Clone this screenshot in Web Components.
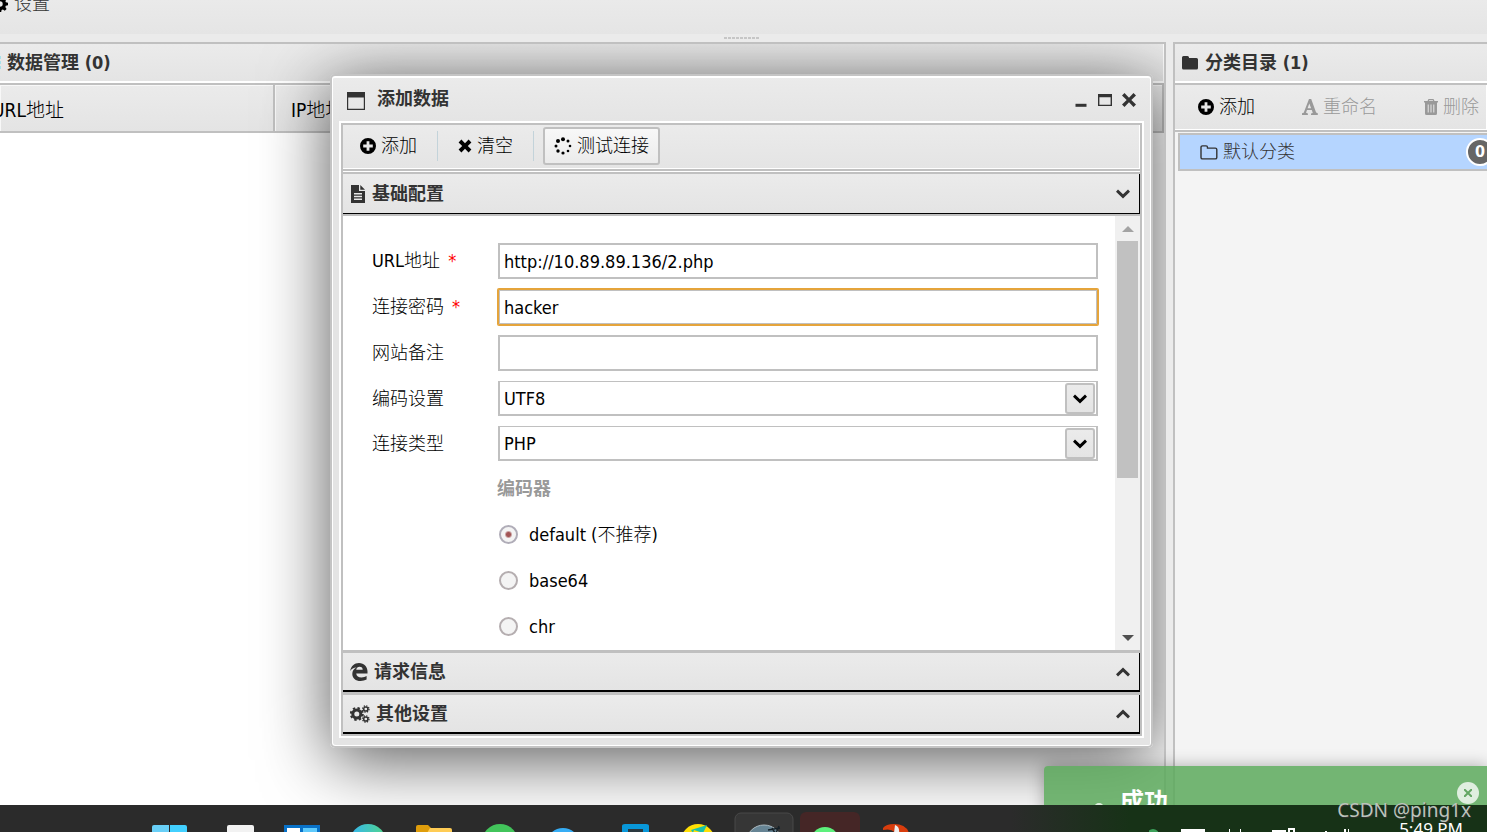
<!DOCTYPE html>
<html lang="zh-CN">
<head>
<meta charset="utf-8">
<title>数据管理</title>
<style>
  html, body { height: 100%; margin: 0; }
  body {
    overflow: hidden;
    color: #000;
    background: #ebebeb;
    font: 18px/24px "DejaVu Sans Condensed", "Noto Sans CJK SC", "Noto Sans", sans-serif;
    --line: #c0c0c0;
    --face: linear-gradient(#ebebeb, #e4e4e4);
    --ink: #333;
  }
</style>
</head>
<body>
<app-shell></app-shell>
<script>
const ICONS = {
  gear: ['0 0 16 16', '<path fill-rule="evenodd" d="M6.7 0h2.6l.4 2.2 1.3.5L12.900 1.400l1.800 1.800-1.300 1.800.5 1.300 2.100.4v2.600l-2.200.4-.5 1.300 1.300 1.900-1.800 1.800-1.900-1.300-1.300.5-.4 2.100H6.700l-.4-2.200-1.300-.5-1.800 1.300-1.900-1.800 1.300-1.900-.5-1.300L0 9.300V6.700l2.200-.4.5-1.300-1.300-1.800 1.800-1.800L5 2.700l1.300-.5zM8 5.300a2.700 2.700 0 1 0 0 5.400 2.700 2.700 0 0 0 0-5.400z"/>'],
  plus: ['0 0 16 16', '<path fill-rule="evenodd" d="M8 0a8 8 0 1 1 0 16A8 8 0 0 1 8 0zM6.600 3.200v3.400H3.200v2.800h3.400v3.400h2.800V9.400h3.400V6.600H9.400V3.200z"/>'],
  times: ['0 0 14 14', '<path d="M3.400.6 7 4.200 10.600.6l2.800 2.800L9.800 7l3.600 3.600-2.800 2.800L7 9.800l-3.600 3.600-2.800-2.800L4.200 7 .6 3.400z"/>'],
  spinner: ['0 0 18 18', '<circle cx="9" cy="2.200" r="2"/><circle cx="14" cy="4" r="1.500"/><circle cx="16" cy="9" r="1.300"/><circle cx="14" cy="14" r="1.300"/><circle cx="9" cy="16" r="1.600"/><circle cx="4" cy="14" r="1.700"/><circle cx="2" cy="9" r="1.500"/><circle cx="4" cy="4" r="2"/>'],
  file: ['0 0 16 18', '<path fill-rule="evenodd" d="M1 0h8v6h6v12H1zM10.300 0 15 4.700h-4.700zM4 8v1.400h8V8zm0 2.800v1.400h8v-1.400zm0 2.800V15h8v-1.400z"/>'],
  folder: ['0 0 18 14', '<path d="M2.500 0h4Q8 0 8 1.500V2h7.500Q17 2 17 3.500v8.500q0 1.500-1.500 1.500h-13Q1 13.500 1 12V1.500Q1 0 2.500 0z"/>'],
  folderOpen: ['0 0 18 15', '<path fill="none" stroke="currentColor" stroke-width="1.400" d="M2.500.9h3.600q1.400 0 1.400 1.500v.7h7.800q1.500 0 1.500 1.500v7.800q0 1.500-1.500 1.500H2.500Q1 13.900 1 12.400v-10Q1 .9 2.500.9z"/>'],
  letter: ['0 0 16 16', '<path fill-rule="evenodd" d="M7 0h2.200l4.900 13.600 1.700.6V16H9v-1.600l1.800-.5-1-3H5l-1 2.900 1.900.6V16H0v-1.700l1.700-.6zM7.300 4.600 5.600 9.200h3.500z"/>'],
  trash: ['0 0 14 16', '<path fill-rule="evenodd" d="M4.500 0h5l1 2H14v1.600h-1V14.500q0 1.500-1.500 1.500h-9Q1 16 1 14.500V3.600H0V2h3.500zm.7 1.200L4.900 2h4.200l-.3-.8zM3.700 5.500v8h1v-8zm2.800 0v8h1v-8zm2.800 0v8h1v-8z"/>'],
  window: ['0 0 18 18', '<path fill-rule="evenodd" d="M0 0h18v18H0zM1.200 5.500v11.300h15.600V5.500z"/>'],
  min: ['0 0 14 14', '<rect x="1.500" y="10.800" width="11" height="3"/>'],
  max: ['0 0 14 14', '<path fill-rule="evenodd" d="M0 1h14v12H0zM1.400 4.200v7.500h11.200V4.200z"/>'],
  close: ['0 0 14 14', '<path d="M2.500 0 7 4.700 11.500 0 14 2.500 9.300 7l4.700 4.500-2.500 2.500L7 9.300 2.500 14 0 11.500 4.700 7 0 2.500z"/>'],
  down: ['0 0 14 10', '<path d="m2 .5 5 4.800L12 .5l2 2.200-7 6.800-7-6.800z"/>'],
  up: ['0 0 14 10', '<path d="M2 9.500 7 4.700l5 4.800 2-2.200L7 .5 0 7.300z"/>'],
  edge: ['0 0 18 18', '<path d="M.2 8C1 3 4.300 0 9 0c5.200 0 8.500 3.700 8.500 8.600v1.900H6.200c.2 2.600 2.400 3.900 5.300 3.900 2.100 0 3.800-.6 5.100-1.400v3.600c-1.700.9-3.800 1.400-6 1.400C5.600 18 2.300 15 2.300 10.900c0-2.700 1.600-5.100 4.300-6.300C3.700 4.700 1.500 6 .2 8zm6-1.200h6.500c0-1.900-1-3-3.100-3C7.700 3.800 6.600 5 6.200 6.800z"/>'],
  gears: ['0 0 20 18', '<circle cx="6.800" cy="9" r="4" fill="none" stroke="currentColor" stroke-width="3"/><circle cx="6.800" cy="9" r="6" fill="none" stroke="currentColor" stroke-width="2" stroke-dasharray="2.400 2.310"/><circle cx="15.800" cy="4" r="2.100" fill="none" stroke="currentColor" stroke-width="1.500"/><circle cx="15.800" cy="4" r="3.200" fill="none" stroke="currentColor" stroke-width="1.300" stroke-dasharray="1.300 1.210"/><circle cx="15.800" cy="14" r="2.100" fill="none" stroke="currentColor" stroke-width="1.500"/><circle cx="15.800" cy="14" r="3.200" fill="none" stroke="currentColor" stroke-width="1.300" stroke-dasharray="1.300 1.210"/>'],
  list: ['0 0 16 14', '<path fill="#a8e2ea" d="M0 0h16v3H0zm0 5h16v3H0zm0 5h16v3H0z"/>']
};

function define(name, css, html, setup) {
  const tpl = document.createElement('template');
  tpl.innerHTML = `<style>*{box-sizing:border-box}${css}</style>${html}`;
  customElements.define(name, class extends HTMLElement {
    connectedCallback() {
      if (this.shadowRoot) return;
      this.attachShadow({ mode: 'open' }).append(tpl.content.cloneNode(true));
      if (setup) setup(this, this.shadowRoot);
    }
  });
}

define('ui-icon', `:host{display:inline-flex;flex:none} svg{display:block}`, ``, (el, root) => {
  const [box, body] = ICONS[el.getAttribute('name')];
  const [, , w, h] = box.split(' ');
  root.innerHTML += `<svg viewBox="${box}" width="${w}" height="${h}" fill="currentColor" aria-hidden="true">${body}</svg>`;
});

define('tool-button', `
  :host{display:block}
  button{display:flex;align-items:center;gap:5px;height:38px;padding:0 9px;font:inherit;font-weight:300;color:inherit;background:none;border:2px solid transparent;border-radius:3px}
  :host([framed]) button{border-color:var(--line);background:linear-gradient(#f8f8f8,#ebebeb)}
  button:disabled{color:#999}`,
  `<button type="button"><slot></slot></button>`,
  (el, root) => {
    const b = root.querySelector('button');
    b.disabled = el.hasAttribute('disabled');
    const icon = document.createElement('ui-icon');
    icon.setAttribute('name', el.getAttribute('icon'));
    b.prepend(icon);
  });

define('tool-bar', `
  :host{display:flex;align-items:center;background:var(--face);box-shadow:inset -1px -1px #fff}
  ::slotted(hr){width:1px;height:30px;margin:0;border:0;background:#c3d3da}`, `<slot></slot>`);

define('panel-title', `
  :host{display:flex;align-items:center;gap:6px;height:39px;padding:0 6px;border-bottom:2px solid #fff;background:var(--face)}
  ::slotted(ui-icon){color:var(--ink)}
  h2{margin:0;font:inherit;font-weight:700;color:var(--ink)}`,
  `<slot name="icon"></slot><h2><slot></slot></h2>`);

define('data-list', `
  :host{display:block}
  table{width:100%;table-layout:fixed;border-collapse:separate;border-spacing:0}
  th{height:48px;padding:3px 0 0 16px;font-size:19px;text-align:left;font-weight:300;white-space:nowrap;background:var(--face);border-right:2px solid var(--line);border-bottom:2px solid var(--line);box-shadow:inset 1px 1px #f8f8f8}
  th:first-child{width:275px;padding-left:0;text-indent:-8px}`,
  `<table><thead><tr><th scope="col">URL地址</th><th scope="col">IP地址</th></tr></thead></table>`);

define('fold-section', `
  :host{display:flex;flex-direction:column;flex:none}
  :host([open]){flex:1;min-height:0}
  button{display:flex;flex:none;align-items:center;gap:6px;width:100%;height:39px;padding:0 9px 0 7px;font:inherit;font-weight:700;color:var(--ink);background:var(--face);border:0 solid #000;border-width:0 1px 2px 0;text-align:left}
  :host([open]) button{height:40px;border-bottom-width:1px}
  .grow{flex:1}
  .body{display:none}
  :host([open]) .body{display:flex;flex:1;min-height:0;border-top:2px solid var(--line)}`,
  `<button type="button"><slot name="icon"></slot><span class="grow"></span></button><div class="body"><slot></slot></div>`,
  (el, root) => {
    root.querySelector('.grow').textContent = el.getAttribute('heading');
    const i = document.createElement('ui-icon');
    i.setAttribute('name', el.hasAttribute('open') ? 'down' : 'up');
    const b = root.querySelector('button');
    b.setAttribute('aria-expanded', el.hasAttribute('open'));
    b.append(i);
  });

define('text-row', `
  :host{display:grid;grid-template-columns:126px 1fr;align-items:center;height:36px;margin-bottom:10px}
  label{font-weight:300;white-space:nowrap} label b{color:red;font-weight:400;margin-left:8px}
  input{width:100%;height:100%;padding:0 4px;font:inherit;color:#000;background:#fff;border:2px solid var(--line);border-radius:0;outline:0}
  :host([active]) input{padding:0 5px;border:1px solid #e5a43b;border-radius:1px;box-shadow:0 0 0 1px #e5a43b,inset 0 0 0 1px #c0c0c0}`,
  `<label for="f"></label><input id="f" type="text">`,
  (el, root) => {
    root.querySelector('label').innerHTML = el.getAttribute('label') + (el.hasAttribute('required') ? '<b>*</b>' : '');
    root.querySelector('input').value = el.getAttribute('value') || '';
  });

define('select-row', `
  :host{display:grid;grid-template-columns:126px 1fr;align-items:center;height:35px;margin-bottom:10px}
  label{font-weight:300}
  .box{display:flex;position:relative;height:100%}
  select{flex:1;padding:2px 4px 0;font:inherit;color:#000;background:#fff;border:2px solid var(--line);border-top-width:1px;border-radius:0;appearance:none}
  .arrow{position:absolute;right:3px;top:2px;display:grid;place-items:center;width:30px;height:31px;border:2px solid var(--line);border-radius:3px;background:var(--face);pointer-events:none}`,
  `<label for="s"></label><div class="box"><select id="s"><option></option></select><span class="arrow"><ui-icon name="down"></ui-icon></span></div>`,
  (el, root) => {
    root.querySelector('label').textContent = el.getAttribute('label');
    root.querySelector('option').textContent = el.getAttribute('value');
  });

define('encoder-list', `
  :host{display:block;padding-left:125px}
  fieldset{margin:0;padding:0;border:0}
  legend{padding:0;height:36px;line-height:36px;margin-bottom:10px;color:#999;font-weight:700}
  label{display:flex;align-items:center;gap:11px;height:36px;margin-bottom:10px;font-weight:300}
  input{appearance:none;width:19px;height:19px;margin:0 0 2px 2px;border:2px solid #b5aeb0;border-radius:50%;background:#f4f4f4}
  input:checked{border-color:#b0adb8;background:radial-gradient(circle,#a25555 0 2px,#f4f4f4 4px)}`,
  `<fieldset><legend>编码器</legend>
   <label><input type="radio" name="enc" checked><span>default (不推荐)</span></label>
   <label><input type="radio" name="enc"><span>base64</span></label>
   <label><input type="radio" name="enc"><span>chr</span></label></fieldset>`);

define('scroll-pane', `
  :host{display:flex;flex:1;min-height:0;background:#fff}
  .content{flex:1;overflow:hidden;padding:27px 17px 0 29px}
  .rail{display:flex;flex-direction:column;align-items:center;width:25px;padding:10px 2px 9px;background:#f0f0f0}
  .thumb{flex:0 0 237px;align-self:stretch;margin:9px 0 auto;background:#c1c1c1}
  .rail svg{flex:none}`,
  `<div class="content"><slot></slot></div>
   <div class="rail"><svg width="12" height="6"><path fill="#a3a3a3" d="M0 6 6 0l6 6z"/></svg><div class="thumb"></div><svg width="12" height="6"><path fill="#505050" d="M0 0h12L6 6z"/></svg></div>`);

define('data-window', `
  :host{display:flex;flex-direction:column;padding:2px 7px 8px;border:2px solid #c4c4c4;border-radius:5px;background:linear-gradient(#ebebeb,#e4e4e4 48px);box-shadow:inset 0 2px #fff,inset 1px -1px #fff,inset -1px 0 #fff,0 12px 68px rgba(0,0,0,.66)}
  header{display:flex;align-items:center;height:43px;padding:0 8px 2px;gap:12px;color:var(--ink)}
  header ui-icon{margin-top:4px}
  header button ui-icon{margin-top:2px}
  .controls{display:flex;gap:10px}
  h1{flex:1;margin:0;font:inherit;font-weight:700}
  header button{display:flex;padding:0;border:0;background:none;color:inherit}
  .inner{display:flex;flex-direction:column;flex:1;min-height:0;border:2px solid #fff}
  .frame{display:flex;flex-direction:column;flex:1;min-height:0;border:2px solid var(--line)}
  tool-bar{height:46px;padding:0 0 2px 6px;border-bottom:2px solid var(--line)}
  tool-bar hr{margin:0 9px}
  .folds{display:flex;flex-direction:column;flex:1;min-height:0;gap:3px;background:var(--line);border-top:1px solid #fff;padding-top:2px}`,
  `<header><ui-icon name="window"></ui-icon><h1>添加数据</h1>
     <div class="controls"><button type="button" aria-label="最小化"><ui-icon name="min"></ui-icon></button>
     <button type="button" aria-label="最大化"><ui-icon name="max"></ui-icon></button>
     <button type="button" aria-label="关闭"><ui-icon name="close"></ui-icon></button></div></header>
   <div class="inner"><div class="frame">
     <tool-bar><tool-button icon="plus">添加</tool-button><hr><tool-button icon="times">清空</tool-button><hr><tool-button icon="spinner" framed>测试连接</tool-button></tool-bar>
     <div class="folds">
       <fold-section open heading="基础配置"><ui-icon slot="icon" name="file"></ui-icon>
         <scroll-pane>
           <text-row label="URL地址" required value="http://10.89.89.136/2.php"></text-row>
           <text-row label="连接密码" required active value="hacker"></text-row>
           <text-row label="网站备注"></text-row>
           <select-row label="编码设置" value="UTF8"></select-row>
           <select-row label="连接类型" value="PHP"></select-row>
           <encoder-list></encoder-list>
         </scroll-pane>
       </fold-section>
       <fold-section heading="请求信息"><ui-icon slot="icon" name="edge"></ui-icon></fold-section>
       <fold-section heading="其他设置"><ui-icon slot="icon" name="gears"></ui-icon></fold-section>
     </div></div></div>`);

define('category-panel', `
  :host{display:flex;flex-direction:column;background:#f4f4f4;border:solid var(--line);border-width:2px 0 0 2px;white-space:nowrap;overflow:hidden}
  tool-bar{height:49px;padding:0 0 2px 12px;border:solid var(--line);border-width:2px 0}
  tool-bar hr{margin:0 16px 0 9px}
  a{display:flex;align-items:center;gap:5px;height:38px;margin:1px 0 0 3px;padding-left:20px;border:2px solid var(--line);border-right:0;background:#b5d5ff;color:var(--ink);text-decoration:none;font-weight:300}
  .count{display:grid;place-items:center;width:28px;height:28px;margin:0 -7px 0 auto;border:2px solid #fff;border-radius:50%;background:#666;color:#fff;font-size:16px;font-weight:700}`,
  `<panel-title><ui-icon slot="icon" name="folder"></ui-icon>分类目录 (1)</panel-title>
   <tool-bar><tool-button icon="plus">添加</tool-button><hr><tool-button icon="letter" disabled>重命名</tool-button><hr><tool-button icon="trash" disabled>删除</tool-button></tool-bar>
   <a href="#default"><ui-icon name="folderOpen"></ui-icon>默认分类<span class="count">0</span></a>`);

define('toast-note', `
  :host{display:flex;justify-content:space-between;align-items:flex-start;padding:16px 8px 0 50px;height:60px;border-radius:4px 0 0 0;background:rgba(92,169,92,.85);color:#fff;box-shadow:0 0 16px rgba(0,0,0,.3)}
  .msg{display:flex;gap:16px;font-size:24px;font-weight:700;line-height:40px}
  .dot{width:10px;height:10px;margin-top:21px;border-radius:50%;background:#dff0df}
  button{display:grid;place-items:center;width:22px;height:22px;padding:0;border:0;border-radius:50%;background:#dfeedf}`,
  `<div class="msg" role="status"><span class="dot"></span>成功</div>
   <button type="button" aria-label="关闭"><svg width="8" height="8" stroke="#63a663" stroke-width="2"><path d="m0 0 8 8M8 0 0 8"/></svg></button>`);

define('task-bar', `
  :host{display:flex;justify-content:space-between;height:27px;overflow:hidden;padding:0 24px 0 137px;background:linear-gradient(90deg,#2b2b2b 68%,#173217 76%);color:#fff}
  .apps{display:grid;grid-template-columns:repeat(12,66px)}
  .tray{display:flex;align-items:flex-start;gap:24px}
  .tray svg{margin-top:22px}
  time{margin-top:12px;font-family:"Noto Sans",sans-serif;font-size:17px;line-height:24px;white-space:nowrap}`,
  `<div class="apps"></div>
   <div class="tray"><svg width="226" height="5"><circle cx="4" cy="8" r="6" fill="#3ca15a"/><path fill="#fff" d="M32 2h24v3H32zM80 2h1v3h-1zM91 2h1v3h-1zM123 3h14v2h-14zM139 1h7v4h-2V3h-3v2h-2zM176 4h2v1h-2zM195 2h2v3h-2zM199 2h1v3h-1z"/></svg><time>5:49 PM</time></div>`,
  (el, root) => {
    const art = [
      '<path fill="#68cff7" d="M15 22q0-2 2-2h15v8H15z"/><path fill="#42d0ff" d="M33 20h15q2 0 2 2v6H33z"/>',
      '<path fill="#f2f2f2" d="M24 22q0-2 2-2h23q2 0 2 2v6H24z"/>',
      '<path fill="#0871c8" d="M15 20h36v8H15z"/><path fill="#fff" d="M18 23h13v5H18z"/><path fill="#5ecafc" d="M34 23h14v5H34z"/>',
      '<defs><linearGradient id="g"><stop stop-color="#35b6f0"/><stop offset="1" stop-color="#51d58b"/></linearGradient></defs><circle cx="33" cy="37" r="18" fill="url(#g)"/>',
      '<path fill="#df9d0b" d="M15 22q0-2 2-2h10l3 3v5H15z"/><path fill="#ffcc55" d="M29 23h20q2 0 2 2v3H26z"/>',
      '<circle cx="33" cy="37" r="18" fill="#42c45b"/>',
      '<circle cx="30" cy="40" r="15" fill="none" stroke="#36adf5" stroke-width="4"/>',
      '<path fill="#0897d9" d="M23 21q0-2 3-2h21q3 0 3 2v8H23z"/><path fill="#2a3940" d="M29 24h15v4H29z"/>',
      '<circle cx="33" cy="36" r="17" fill="#ffdf05"/><path fill="#19c2aa" d="m26 25 16-5-4 8-9-3-1 3z"/>',
      '<rect x="4" y="8" width="58" height="40" rx="6" fill="#363636" stroke="#494949"/><circle cx="33" cy="38" r="18" fill="#668494" stroke="#aab8bf"/><path fill="none" stroke="#162128" stroke-width="1.500" d="m37 25 12-2M41 23l3 5m4-7-3 7"/>',
      '<rect x="3" y="7" width="60" height="40" rx="6" fill="#452626"/><circle cx="28" cy="36" r="14" fill="#5df07c"/>',
      '<path fill="#d93d0d" d="M20 23q3-4 11-4 12 0 15 9H32q-3-5-12-3z"/><path fill="#eee" d="M32 20q5 2 4 8h-5z"/>'
    ];
    root.querySelector('.apps').innerHTML = art.map(a => `<svg width="66" height="27" aria-hidden="true">${a}</svg>`).join('');
  });

define('app-shell', `
  :host{display:flex;flex-direction:column;height:100vh;position:relative}
  nav{display:flex;flex:none;height:34px;overflow:hidden;background:linear-gradient(#eaeaea,#e5e5e5)}
  nav a{display:flex;align-items:flex-start;gap:6px;margin:-8px 0 0 -8px;color:var(--ink);text-decoration:none;font-weight:300}
  nav ui-icon{margin-top:4px;color:#000}
  .grip{display:grid;place-items:center;flex:none;height:8px;padding-right:4px}
  .grip i{width:35px;height:2px;background:repeating-linear-gradient(90deg,#c6c6c6 0 3px,transparent 3px 4px)}
  main{display:grid;grid-template-columns:1fr 314px;gap:7px;flex:1;min-height:0;position:relative;overflow:hidden}
  .data{position:relative;overflow:hidden;background:#fff;border:solid var(--line);border-width:2px 2px 0 0}
  .data panel-title{padding-left:0;border-right:1px solid #fff}
  .data panel-title ui-icon{margin-left:-15px}
  .data data-list{border-top:2px solid var(--line)}
  data-window{position:absolute;inset:30px 11px 57px 330px}
  toast-note{position:absolute;right:0;bottom:-21px;width:443px}
  .mark{position:absolute;right:16px;bottom:8px;font-family:"Noto Sans",sans-serif;font-size:19px;line-height:28px;color:#bbc3bb;text-shadow:1px 1px 1px #333}`,
  `<nav><a href="#settings"><ui-icon name="gear"></ui-icon>设置</a></nav>
   <div class="grip"><i></i></div>
   <main>
     <section class="data"><panel-title><ui-icon slot="icon" name="list"></ui-icon>数据管理 (0)</panel-title><data-list></data-list><data-window></data-window></section>
     <category-panel></category-panel>
     <toast-note></toast-note>
   </main>
   <task-bar></task-bar>
   <div class="mark">CSDN @ping1x</div>`);
</script>
</body>
</html>
